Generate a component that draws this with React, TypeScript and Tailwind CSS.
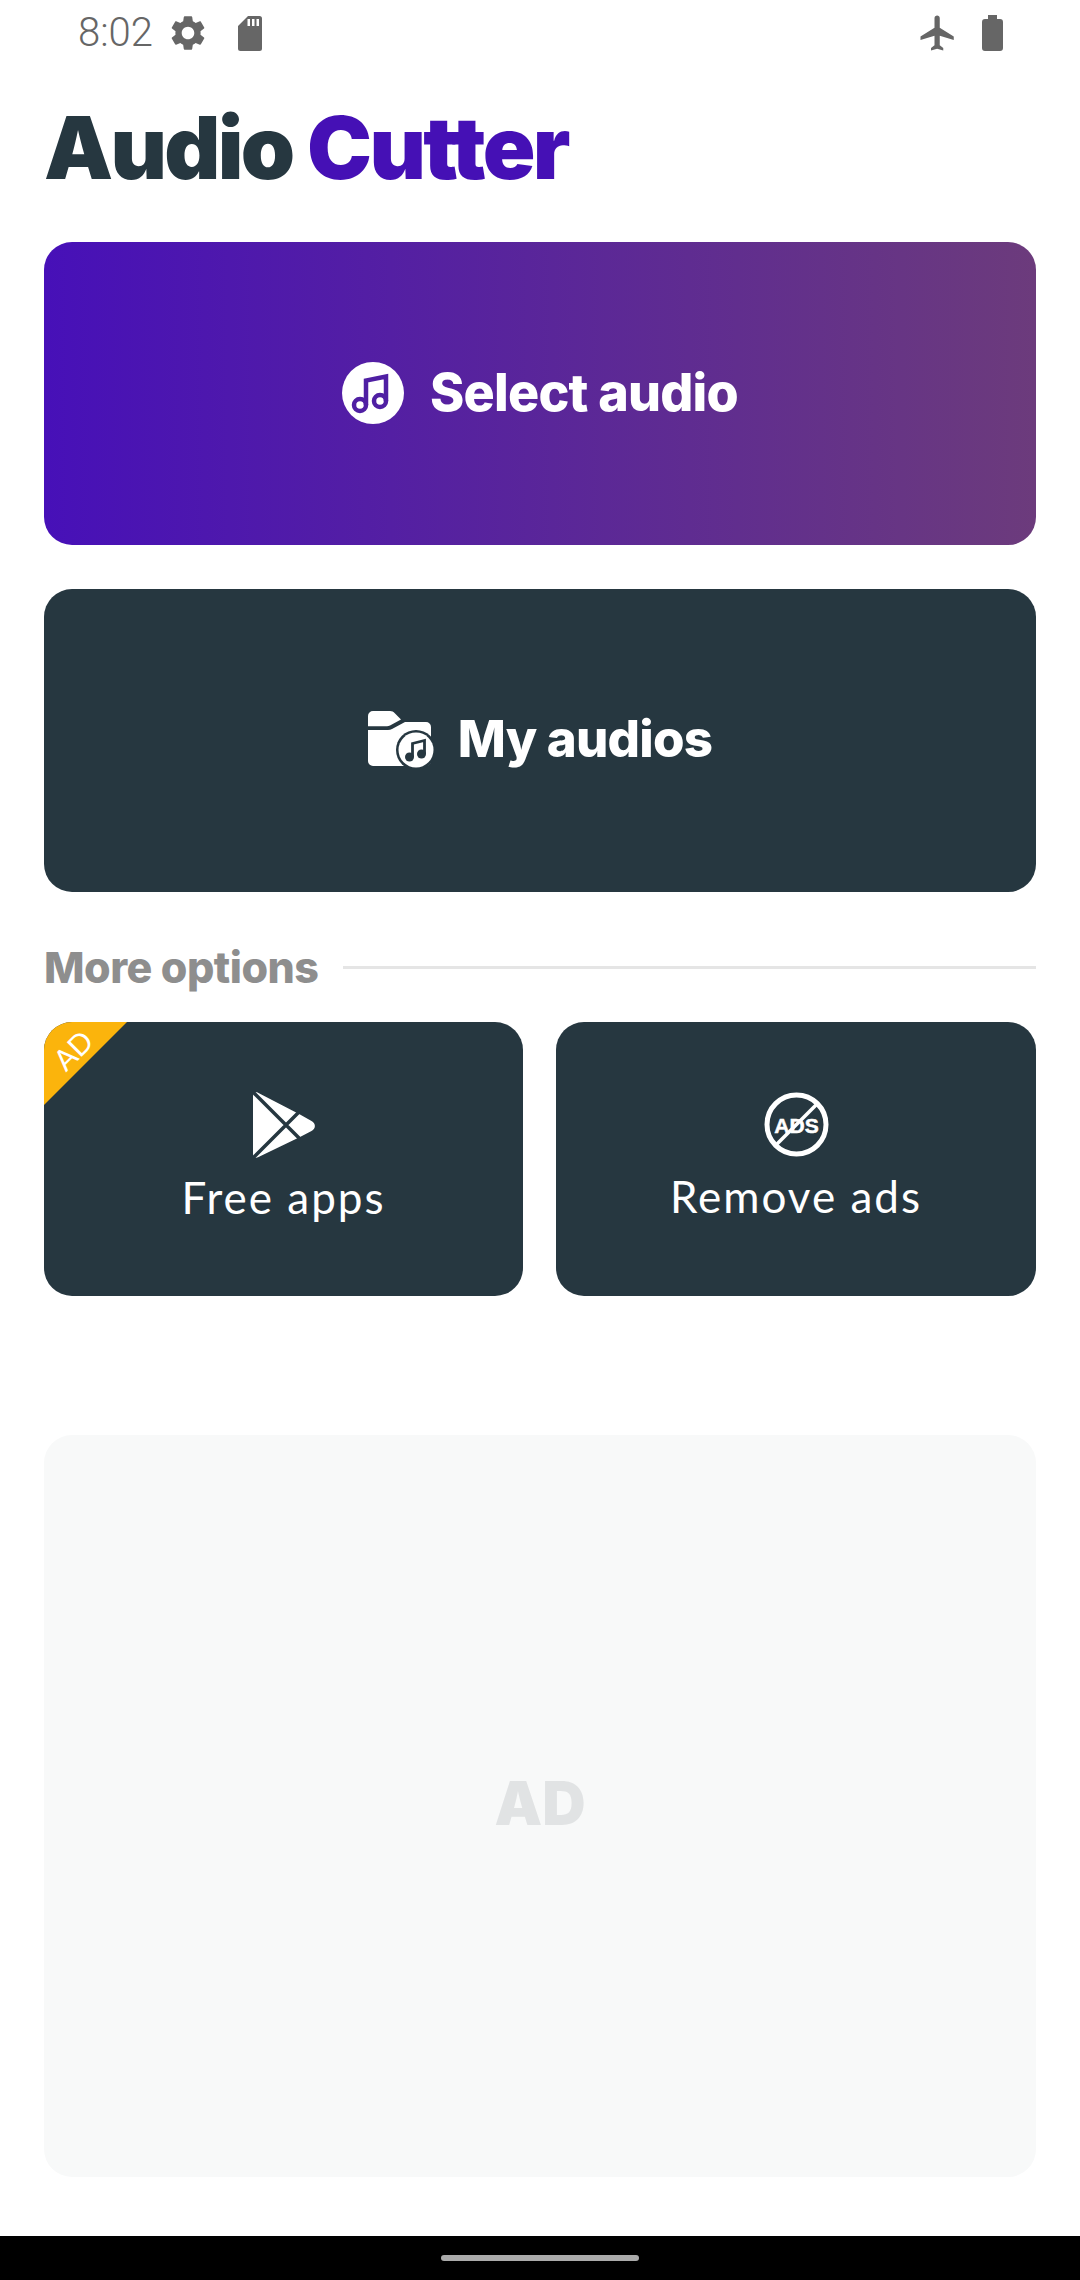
const CARD_FONT = "font-['Lato','Noto_Sans',sans-serif]";
const HEAVY_FONT = "font-['Inter','Noto_Sans',sans-serif]";

function Gear() {
  return (
    <svg viewBox="0 0 24 24" className="h-[42px] w-[42px] fill-[#666666]">
      <path d="M19.14 12.94c.04-.3.06-.61.06-.94 0-.32-.02-.64-.07-.94l2.03-1.58c.18-.14.23-.41.12-.61l-1.92-3.32c-.12-.22-.37-.29-.59-.22l-2.39.96c-.5-.38-1.03-.7-1.62-.94l-.36-2.54c-.04-.24-.24-.41-.48-.41h-3.84c-.24 0-.43.17-.47.41l-.36 2.54c-.59.24-1.13.57-1.62.94l-2.39-.96c-.22-.08-.47 0-.59.22L2.74 8.87c-.12.21-.08.47.12.61l2.03 1.58c-.05.3-.09.63-.09.94s.02.64.07.94l-2.03 1.58c-.18.14-.23.41-.12.61l1.92 3.32c.12.22.37.29.59.22l2.39-.96c.5.38 1.03.7 1.62.94l.36 2.54c.05.24.24.41.48.41h3.84c.24 0 .44-.17.47-.41l.36-2.54c.59-.24 1.13-.56 1.62-.94l2.39.96c.22.08.47 0 .59-.22l1.92-3.32c.12-.22.07-.47-.12-.61l-2.01-1.58zM12 15.6c-1.98 0-3.6-1.62-3.6-3.6s1.62-3.6 3.6-3.6 3.6 1.62 3.6 3.6-1.62 3.6-3.6 3.6z" />
    </svg>
  );
}

function SdCard() {
  return (
    <svg viewBox="0 0 24 35" className="h-[35px] w-[24px] fill-[#666666]">
      <path
        fillRule="evenodd"
        d="M10 0h11.500A2.500 2.500 0 0 1 24 2.500v30a2.500 2.500 0 0 1-2.500 2.500h-19A2.500 2.500 0 0 1 0 32.500V10zM9.500 3v7h2.500V3zm4.500 0v7h2.500V3zm4.500 0v7H21V3z"
      />
    </svg>
  );
}

function Plane() {
  return (
    <svg viewBox="0 0 24 24" className="h-[42px] w-[42px] fill-[#666666]">
      <path d="M21 16v-2l-8-5V3.500c0-.83-.67-1.500-1.500-1.500S10 2.670 10 3.500V9l-8 5v2l8-2.500V19l-2 1.500V22l3.500-1 3.500 1v-1.500L13 19v-5.500l8 2.500z" />
    </svg>
  );
}

function Battery() {
  return (
    <svg viewBox="0 0 21 36" className="h-[36px] w-[21px] fill-[#666666]">
      <path d="M6 0h9v4h3a3 3 0 0 1 3 3v26a3 3 0 0 1-3 3H3a3 3 0 0 1-3-3V7a3 3 0 0 1 3-3h3z" />
    </svg>
  );
}

function MusicCircle() {
  return (
    <svg viewBox="0 0 62 62" className="h-[62px] w-[62px]">
      <circle cx="31" cy="31" r="31" fill="#ffffff" />
      <g fill="none" stroke="#4f1fa3" strokeWidth="4.500">
        <circle cx="18" cy="43" r="6" />
        <circle cx="38" cy="39" r="6" />
        <path d="M24 43V18.500L44 14.500V39" />
      </g>
    </svg>
  );
}

function FolderMusic() {
  return (
    <svg viewBox="0 0 66 57" className="h-[57px] w-[66px]">
      <path
        d="M5 0h17c2 0 3.500.8 4.800 2.200L33 8.500 22 14.500c-1 .5-2 .7-3 .7H0V5a5 5 0 0 1 5-5z"
        fill="#ffffff"
      />
      <path
        d="M0 19h20c1.500 0 2.800-.3 4-1l13-7h21a5 5 0 0 1 5 5v34a5 5 0 0 1-5 5H5a5 5 0 0 1-5-5z"
        fill="#ffffff"
      />
      <circle cx="48" cy="39" r="20" fill="#263740" />
      <circle cx="48" cy="39" r="17.500" fill="#ffffff" />
      <circle cx="41.500" cy="46" r="4.500" fill="#263740" />
      <circle cx="53.500" cy="43" r="4.500" fill="#263740" />
      <path d="M44.500 46V32.500L56.500 29.500V43" fill="none" stroke="#263740" strokeWidth="2.800" />
    </svg>
  );
}

function PlayStore() {
  return (
    <svg viewBox="0 0 62 66" className="h-[66px] w-[62px]">
      <path
        d="M0 4C0 1 2.500-.5 5 .8L47 22.500 58.500 29c4.500 2.500 4.500 7.500 0 10L47 45 5 65.200C2.500 66.500 0 65 0 62z"
        fill="#ffffff"
      />
      <path d="M0 0L47 47M0 66L47 19" fill="none" stroke="#263740" strokeWidth="3.500" />
    </svg>
  );
}

function NoAds() {
  return (
    <svg viewBox="0 0 65 65" className="h-[65px] w-[65px]">
      <circle cx="32.500" cy="32.500" r="29.500" fill="none" stroke="#ffffff" strokeWidth="5" />
      <path d="M12 53L53 12" stroke="#ffffff" strokeWidth="3.500" />
      <text
        x="32.500"
        y="40.500"
        textAnchor="middle"
        fill="#ffffff"
        stroke="#ffffff"
        strokeWidth="0.500"
        fontFamily="Liberation Sans, sans-serif"
        fontWeight="700"
        fontSize="21"
      >
        ADS
      </text>
    </svg>
  );
}

function SmallCard({ label, children, ad }: { label: string; children: React.ReactNode; ad?: boolean }) {
  return (
    <div className="relative flex h-[274px] flex-col items-center overflow-hidden rounded-[28px] bg-[#263740] pt-[70px] text-white">
      {ad && (
        <>
          <div className="absolute top-0 left-0 h-[83px] w-[83px] bg-[#fbb40c] [clip-path:polygon(0_0,100%_0,0_100%)]" />
          <span className="absolute top-[11px] left-[8px] -rotate-45 text-[29px] leading-[34px] font-normal">AD</span>
        </>
      )}
      {children}
      <span className="mt-[12px] text-[44px] leading-[54px] font-normal tracking-[2px]">{label}</span>
    </div>
  );
}

export default function App() {
  return (
    <div className={`flex h-[2280px] w-[1080px] flex-col overflow-hidden bg-white ${CARD_FONT}`}>
      <div className="flex h-[66px] items-center pr-[77px] pl-[78px] text-[#666666]">
        <span className="font-['Roboto',sans-serif] text-[40px] leading-none font-light">8:02</span>
        <div className="mr-[29px] ml-[14px]"><Gear /></div>
        <SdCard />
        <div className="mr-[23px] ml-auto"><Plane /></div>
        <Battery />
      </div>

      <h1 className={`flex h-[176px] items-center pb-[14px] pl-[44px] text-[87px] leading-none font-black tracking-[-2.7px] text-[#263740] ${HEAVY_FONT}`}>
        Audio&nbsp;<span className="text-[#4510b5]">Cutter</span>
      </h1>

      <div className="flex flex-col gap-[44px] px-[44px]">
        <button className={`flex h-[303px] items-center justify-center gap-[26px] rounded-[28px] bg-linear-to-r/srgb from-[#4710b8] to-[#6c3b7c] pb-[2px] text-[52px] font-extrabold tracking-[-0.8px] text-white ${HEAVY_FONT}`}>
          <MusicCircle />
          Select audio
        </button>
        <button className={`flex h-[303px] items-center justify-center gap-[24px] rounded-[28px] bg-[#263740] pb-[2px] text-[51px] font-extrabold tracking-[-0.8px] text-white ${HEAVY_FONT}`}>
          <FolderMusic />
          My audios
        </button>
      </div>

      <div className="flex h-[130px] items-center gap-[24px] px-[44px] pt-[20px]">
        <span className={`text-[43px] leading-none font-extrabold tracking-[-0.5px] text-[#8e8e8e] ${HEAVY_FONT}`}>More options</span>
        <div className="h-[3px] flex-1 bg-[#e5e5e5]" />
      </div>

      <div className="grid grid-cols-[479px_480px] gap-[33px] px-[44px]">
        <SmallCard label="Free apps" ad>
          <PlayStore />
        </SmallCard>
        <SmallCard label="Remove ads">
          <NoAds />
        </SmallCard>
      </div>

      <div className="mx-[44px] mt-[139px] flex h-[742px] items-center justify-center rounded-[28px] bg-[#f8f9f9]">
        <span className={`pb-[6px] text-[60px] leading-none font-black text-[#e1e3e4] ${HEAVY_FONT}`}>AD</span>
      </div>

      <div className="mt-auto flex h-[44px] items-center justify-center bg-black">
        <div className="h-[6px] w-[198px] rounded-full bg-[#aaaaaa]" />
      </div>
    </div>
  );
}
